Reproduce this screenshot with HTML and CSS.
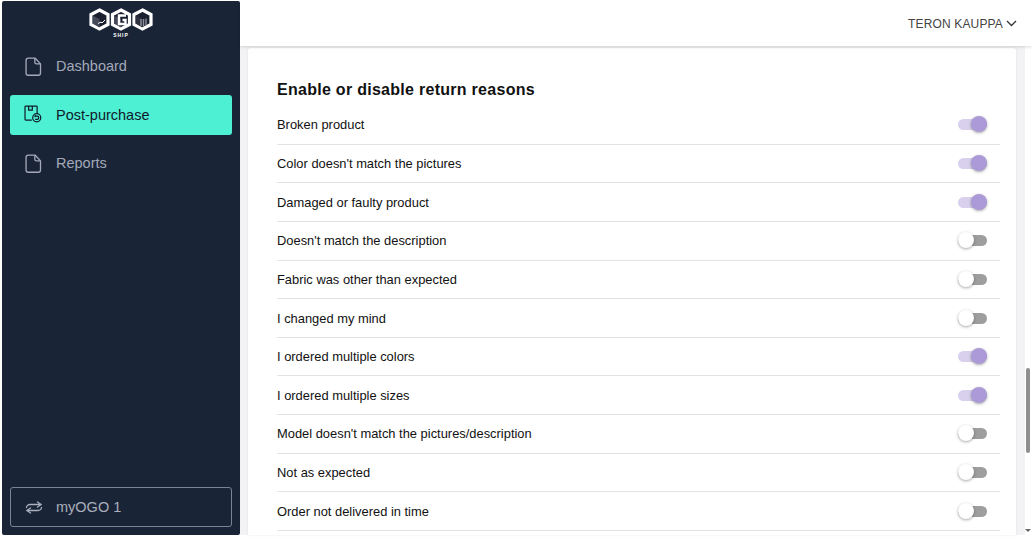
FILE: index.html
```html
<!DOCTYPE html>
<html lang="en">

<head>
    <meta charset="UTF-8">
    <meta name="viewport" content="width=device-width, initial-scale=1.0">
    <title>myOGO - Post-purchase</title>
    <link rel="stylesheet" href="styles.css">
</head>

<body>

    <div class="app">
        <!-- Sidebar -->
        <aside class="sidebar">
            <div class="logo">
                <svg width="66" height="31" viewBox="0 0 66 31">
                    <g fill="#1b2030" stroke="#fff" stroke-width="3.200" stroke-linejoin="miter">
                        <polygon points="11.500,2 20,6.500 20,16.500 11.500,21 3,16.500 3,6.500" />
                        <polygon points="33,2 41.500,6.500 41.500,16.500 33,21 24.500,16.500 24.500,6.500" />
                        <polygon points="54.500,2 63,6.500 63,16.500 54.500,21 46,16.500 46,6.500" />
                    </g>
                    <polygon points="4.500,7.500 11.500,11 11.500,19.500 4.500,15.500" fill="#454a5a" />
                    <polygon points="26,7.500 33,11 33,19.500 26,15.500" fill="#454a5a" />
                    <polygon points="47.500,7.500 54.500,11 54.500,19.500 47.500,15.500" fill="#2c3140" />
                    <path d="M38 7.500h-7v8.500h6.500v-4h-3" fill="none" stroke="#fff" stroke-width="2.400" />
                    <path d="M10 15.500l3-1.500 1 1 3-3" fill="none" stroke="#fff" stroke-width="1" />
                    <path d="M53 11v7M55.500 11v7M58 10.500v7" stroke="#8b8f99" stroke-width="1.400" />
                    <text x="33" y="28.500" class="logo-text">SHIP</text>
                </svg>
            </div>

            <nav class="nav">
                <a class="nav-item">
                    <svg class="nav-icon" width="21" height="21" viewBox="0 0 24 24" fill="none" stroke="currentColor" stroke-width="1.500" stroke-linejoin="round">
                        <path d="M6 2.500h8l6 6.500v10.500a2.500 2.500 0 0 1-2.500 2.500h-11.500a2.500 2.500 0 0 1-2.500-2.500v-14.500a2.500 2.500 0 0 1 2.500-2.500z" />
                        <path d="M13.500 2.500v4.500a2 2 0 0 0 2 2h4.500" />
                    </svg>
                    Dashboard
                </a>
                <a class="nav-item active">
                    <svg class="nav-icon" width="21" height="21" viewBox="0 0 26 26" fill="none" stroke="currentColor" stroke-width="1.500">
                        <path d="M11 20h-7.500a1 1 0 0 1-1-1v-15.500a1 1 0 0 1 1-1h13a1 1 0 0 1 1 1v8" />
                        <path d="M7 2.500v5h4.500v-5" />
                        <circle cx="17" cy="17" r="5" />
                        <path d="M15 15h2.500a2 2 0 0 1 0 4h-2.500M15 13.500v3" />
                    </svg>
                    Post-purchase
                </a>
                <a class="nav-item">
                    <svg class="nav-icon" width="21" height="21" viewBox="0 0 24 24" fill="none" stroke="currentColor" stroke-width="1.500" stroke-linejoin="round">
                        <path d="M6 2.500h8l6 6.500v10.500a2.500 2.500 0 0 1-2.500 2.500h-11.500a2.500 2.500 0 0 1-2.500-2.500v-14.500a2.500 2.500 0 0 1 2.500-2.500z" />
                        <path d="M13.500 2.500v4.500a2 2 0 0 0 2 2h4.500" />
                    </svg>
                    Reports
                </a>
            </nav>

            <a class="switcher">
                <svg class="switch-icon" width="18" height="13" viewBox="0 0 18 13" fill="none" stroke="currentColor" stroke-width="1.300" stroke-linecap="round" stroke-linejoin="round">
                    <path d="M12.500 1l3.500 2.500-3.500 2.500" />
                    <path d="M16 3.500h-11c-2 0-3.500 1.500-3.500 3" />
                    <path d="M5.500 12l-3.500-2.500 3.500-2.500" />
                    <path d="M2 9.500h11c2 0 3.500-1.500 3.500-3" />
                </svg>
                myOGO 1
            </a>
        </aside>

        <!-- Main area -->
        <div class="main">
            <header class="topbar">
                <span class="user">TERON KAUPPA</span>
                <svg width="11" height="7" viewBox="0 0 11 7" fill="none" stroke="#333" stroke-width="1.300">
                    <path d="M1 1l4.500 4.500 4.500-4.500" />
                </svg>
            </header>

            <div class="content">
                <section class="card">
                    <h2 class="card-title">Enable or disable return reasons</h2>
                    <div class="row"><span>Broken product</span><span class="switch on"></span></div>
                    <div class="row"><span>Color doesn't match the pictures</span><span class="switch on"></span></div>
                    <div class="row"><span>Damaged or faulty product</span><span class="switch on"></span></div>
                    <div class="row"><span>Doesn't match the description</span><span class="switch"></span></div>
                    <div class="row"><span>Fabric was other than expected</span><span class="switch"></span></div>
                    <div class="row"><span>I changed my mind</span><span class="switch"></span></div>
                    <div class="row"><span>I ordered multiple colors</span><span class="switch on"></span></div>
                    <div class="row"><span>I ordered multiple sizes</span><span class="switch on"></span></div>
                    <div class="row"><span>Model doesn't match the pictures/description</span><span class="switch"></span></div>
                    <div class="row"><span>Not as expected</span><span class="switch"></span></div>
                    <div class="row"><span>Order not delivered in time</span><span class="switch"></span></div>
                </section>

                <div class="scrollbar">
                    <div class="scroll-thumb"></div>
                    <div class="scroll-arrow"></div>
                </div>
            </div>
        </div>
    </div>

</body>

</html>
```

FILE: styles.css
```css
html,
body {
    margin: 0;
    padding: 0;
    height: 100%;
    overflow: hidden;
}

body {
    font-family: "Liberation Sans", Arial, sans-serif;
    background-color: #fff;
}

.app {
    display: flex;
    height: 537px;
    box-sizing: border-box;
    padding: 1px 0 2px 2px;
}

/* Sidebar */
.sidebar {
    width: 237.500px;
    flex-shrink: 0;
    background-color: #1a2437;
    display: flex;
    flex-direction: column;
    padding: 7px 8px 8px;
    box-sizing: border-box;
    border-radius: 2px;
}

.logo {
    height: 31px;
    display: flex;
    justify-content: center;
    margin-bottom: 7px;
}

.logo-text {
    font-size: 5px;
    font-weight: bold;
    fill: #fff;
    text-anchor: middle;
    letter-spacing: 1px;
}

.nav {
    display: flex;
    flex-direction: column;
    gap: 8.500px;
    flex: 1;
}

.nav-item {
    display: flex;
    align-items: center;
    height: 40px;
    padding-left: 13px;
    border-radius: 3px;
    color: #a3a9b8;
    font-size: 14.500px;
}

.nav-item.active {
    background-color: #4ef0d3;
    color: #111a2b;
}

.nav-icon {
    margin-right: 12px;
    flex-shrink: 0;
}

.switcher {
    display: flex;
    align-items: center;
    height: 40px;
    padding-left: 14px;
    border: 1px solid #7b8496;
    border-radius: 3px;
    color: #a9afbd;
    font-size: 14.500px;
    box-sizing: border-box;
}

.switch-icon {
    margin-right: 13px;
    flex-shrink: 0;
}

/* Main area */
.main {
    flex: 1;
    min-width: 0;
    display: flex;
    flex-direction: column;
    margin-top: -1px;
}

.topbar {
    height: 46px;
    flex-shrink: 0;
    display: flex;
    align-items: center;
    justify-content: flex-end;
    gap: 3px;
    padding-right: 15px;
    background-color: #fff;
    box-shadow: 0 1px 3px rgba(0, 0, 0, 0.15);
    position: relative;
    z-index: 1;
}

.user {
    font-size: 12px;
    letter-spacing: 0.15px;
    padding-top: 1px;
    color: #444;
}

.content {
    flex: 1;
    min-height: 0;
    display: flex;
    background-color: #f3f3f5;
    padding: 2px 0 0 8.500px;
}

.card {
    width: 768px;
    box-sizing: border-box;
    background-color: #fff;
    padding: 32px 16px 0 29px;
    border-radius: 3px 3px 0 0;
    box-shadow: 0 0 3px rgba(0, 0, 0, 0.08);
}

.card-title {
    margin: 0 0 5.900px;
    font-size: 16px;
    font-weight: bold;
    letter-spacing: 0.28px;
    line-height: 20px;
    color: #111;
}

.row {
    display: flex;
    align-items: center;
    justify-content: space-between;
    height: 38.670px;
    box-sizing: border-box;
    border-bottom: 1px solid #e2e2e2;
    font-size: 12.900px;
    color: #111;
    padding-right: 13px;
}

/* Toggle switch */
.switch {
    position: relative;
    display: block;
    width: 29px;
    height: 11px;
    border-radius: 6px;
    background-color: #9e9e9e;
}

.switch::after {
    content: "";
    position: absolute;
    top: -3px;
    left: 0;
    width: 16px;
    height: 16px;
    border-radius: 50%;
    background-color: #fff;
    box-shadow: 0 1px 3px rgba(0, 0, 0, 0.35);
}

.switch.on {
    background-color: #d8d0ec;
}

.switch.on::after {
    left: auto;
    right: 0;
    background-color: #ab99d8;
}

/* Scrollbar */
.scrollbar {
    flex: 1;
    position: relative;
    background-color: #fff;
    margin-left: 8.500px;
    margin-top: -2px;
}

.scroll-thumb {
    position: absolute;
    left: 1px;
    top: 322px;
    width: 4px;
    height: 85px;
    border-radius: 2px;
    background-color: #8f8f8f;
}

.scroll-arrow {
    position: absolute;
    left: 0;
    bottom: 3px;
    border-left: 3px solid transparent;
    border-right: 3px solid transparent;
    border-top: 3px solid #666;
}
```
